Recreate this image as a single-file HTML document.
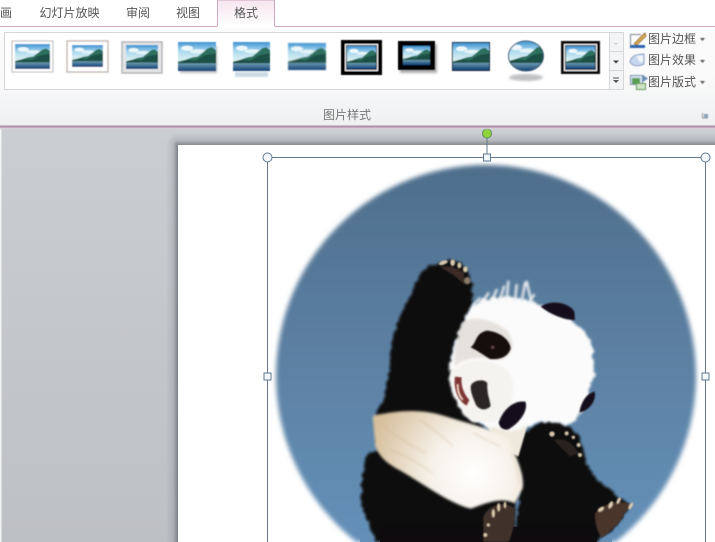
<!DOCTYPE html>
<html lang="zh"><head><meta charset="utf-8"><style>
html,body{margin:0;padding:0;width:715px;height:542px;overflow:hidden}
#w{position:relative;width:715px;height:542px;overflow:hidden;background:#c6c9cd;font-family:"Liberation Sans","Noto Sans CJK SC",sans-serif;color:#555;font-size:12px}
.t{position:absolute;white-space:nowrap;line-height:16px;filter:blur(.3px)}
svg{position:absolute;left:0;top:0}
</style></head><body><div id="w">
<svg width="715" height="542" viewBox="0 0 715 542" xmlns="http://www.w3.org/2000/svg">
<defs>
<linearGradient id="rb" x1="0" y1="0" x2="0" y2="1"><stop offset="0" stop-color="#fdfdfd"/><stop offset=".65" stop-color="#f9f9fa"/><stop offset="1" stop-color="#eef0f1"/></linearGradient>
<linearGradient id="bg" x1="0" y1="0" x2="0" y2="1"><stop offset="0" stop-color="#ced1d5"/><stop offset="1" stop-color="#bdc0c5"/></linearGradient>
<linearGradient id="shl" x1="0" y1="0" x2="1" y2="0"><stop offset="0" stop-color="#70747a" stop-opacity="0"/><stop offset=".6" stop-color="#70747a" stop-opacity=".22"/><stop offset="1" stop-color="#70747a" stop-opacity=".85"/></linearGradient>
<linearGradient id="sht" x1="0" y1="0" x2="0" y2="1"><stop offset="0" stop-color="#70747a" stop-opacity="0"/><stop offset=".6" stop-color="#70747a" stop-opacity=".22"/><stop offset="1" stop-color="#70747a" stop-opacity=".75"/></linearGradient>
<radialGradient id="shc" gradientUnits="userSpaceOnUse" cx="178" cy="145" r="12"><stop offset="0" stop-color="#70747a" stop-opacity=".8"/><stop offset=".4" stop-color="#70747a" stop-opacity=".22"/><stop offset="1" stop-color="#70747a" stop-opacity="0"/></radialGradient>
<linearGradient id="tab" x1="0" y1="0" x2="0" y2="1"><stop offset="0" stop-color="#f5e4ee"/><stop offset="1" stop-color="#fff"/></linearGradient>
<linearGradient id="sky" x1="0" y1="0" x2="0" y2="1"><stop offset="0" stop-color="#3f93d2"/><stop offset=".3" stop-color="#a9d8ee"/><stop offset=".6" stop-color="#d8eef2"/></linearGradient>
<linearGradient id="sea" x1="0" y1="0" x2="0" y2="1"><stop offset="0" stop-color="#6d9cae"/><stop offset="1" stop-color="#123f78"/></linearGradient>
<linearGradient id="circ" gradientUnits="userSpaceOnUse" x1="0" y1="165" x2="0" y2="542"><stop offset="0" stop-color="#4e6e8c"/><stop offset=".5" stop-color="#5c80a2"/><stop offset="1" stop-color="#6490b8"/></linearGradient>
<radialGradient id="belly" gradientUnits="userSpaceOnUse" cx="400" cy="700" r="320"><stop offset="0" stop-color="#ffffff"/><stop offset=".4" stop-color="#f6f1e9"/><stop offset="1" stop-color="#d6bf9c"/></radialGradient>
<filter id="b1"><feGaussianBlur stdDeviation="1"/></filter>
<filter id="b3" x="-5%" y="-5%" width="110%" height="110%"><feGaussianBlur stdDeviation="2.4"/></filter>
<filter id="s1"><feGaussianBlur stdDeviation=".5"/></filter>
<filter id="fur" filterUnits="userSpaceOnUse" x="-50" y="-50" width="1100" height="1100"><feTurbulence type="fractalNoise" baseFrequency=".05" numOctaves="2" seed="4" result="n"/><feDisplacementMap in="SourceGraphic" in2="n" scale="20" xChannelSelector="R" yChannelSelector="G"/><feGaussianBlur stdDeviation="3.6"/></filter>
<filter id="sf" filterUnits="userSpaceOnUse" x="-50" y="-50" width="1100" height="1100"><feGaussianBlur stdDeviation="4"/></filter>
<filter id="sm" filterUnits="userSpaceOnUse" x="-50" y="-50" width="1100" height="1100"><feGaussianBlur stdDeviation="2.6"/></filter>
<symbol id="pic" viewBox="0 0 38 28" preserveAspectRatio="none">
<rect width="38" height="28" fill="url(#sky)"/>
<ellipse cx="9" cy="6" rx="6" ry="2.5" fill="#eef8fb"/><ellipse cx="20" cy="9" rx="8" ry="2" fill="#e4f3f6"/>
<path d="M0 19 L8 17 L14 15 L20 14 L25 10 L30 6 L34 5 L38 8 V21 H0Z" fill="#2f6f5f"/>
<path d="M0 20 L10 17 L18 18 L26 13 L38 11 V21 H0Z" fill="#1f5044"/>
<rect y="20.5" width="38" height="7.5" fill="url(#sea)"/>
</symbol>
</defs>

<!-- workspace -->
<rect width="715" height="542" fill="url(#bg)"/>
<rect x="0" y="127" width="1.5" height="415" fill="#f2f3f4"/>
<rect x="166" y="145" width="12" height="397" fill="url(#shl)"/>
<rect x="178" y="133" width="537" height="12" fill="url(#sht)"/>
<rect x="166" y="133" width="12" height="12" fill="url(#shc)"/>
<rect x="178" y="145" width="537" height="397" fill="#fff"/>

<!-- picture -->
<path d="M356.400 542 A210 211 0 1 1 615.600 542 Z" fill="url(#circ)" filter="url(#b3)"/>
<rect x="360" y="532" width="252" height="10" fill="#6490b8"/>

<g transform="translate(340 240) scale(.33333)">
 <!-- black body -->
 <g filter="url(#fur)">
 <path d="M232 125 C240 85 280 62 330 62 C370 66 395 95 398 150 C400 195 370 250 345 310 C330 370 330 430 350 480 L400 540 L540 640 L520 906 L110 906 C80 850 50 780 70 700 L78 645 L115 630 L110 520 C130 470 150 420 150 370 C150 300 170 240 205 180Z" fill="#0e0b0e"/>
 <path d="M525 620 C545 570 590 545 640 545 C690 550 730 590 735 650 C745 700 790 745 870 790 L830 860 L770 906 L515 906 C540 830 545 760 520 680Z" fill="#100c10"/>
 </g>
 <rect x="120" y="860" width="650" height="46" fill="#0e0b0e"/>
 <!-- filler under chin -->
 <path d="M420 530 L570 530 L535 650 L480 620Z" fill="#efe8dc" filter="url(#sm)"/>
 <!-- belly -->
 <path d="M98 528 C170 510 250 505 320 530 C400 555 470 570 510 600 C525 650 555 700 548 745 L525 790 C480 770 440 790 392 806 C330 790 270 745 195 700 C160 680 125 665 106 620Z" fill="url(#belly)" filter="url(#sf)"/>
 <g fill="none" stroke="#c9ad88" stroke-width="5" opacity=".3" filter="url(#sf)">
  <path d="M130 560 Q200 610 260 640"/><path d="M150 630 Q210 650 280 700"/><path d="M240 540 Q300 580 340 620"/><path d="M515 640 Q535 690 538 735"/><path d="M400 580 Q440 600 480 620"/>
 </g>
 <!-- head -->
 <g filter="url(#fur)">
 <path d="M395 195 C440 170 520 160 590 190 C650 210 720 250 750 300 C768 350 765 420 745 470 C730 510 710 540 690 555 L600 545 L520 575 C470 565 420 560 385 535 C340 490 322 440 330 385 C335 320 365 250 395 195Z" fill="#fbfbfb"/>
 </g>
 <path d="M365 250 C395 225 450 235 500 270 C530 310 520 350 480 360 C420 350 370 350 345 380 C340 330 350 290 365 250Z" fill="#d8d0c8" opacity=".6" filter="url(#sf)"/>
 <path d="M335 395 C390 345 470 355 510 400 C535 450 510 510 480 545 L400 545 C355 500 335 450 335 395Z" fill="#f5f3f0" filter="url(#sf)"/>
 <!-- ears -->
 <path d="M602 200 C630 180 685 185 703 215 L705 240 C670 240 635 225 602 200Z" fill="#15111a" filter="url(#sm)"/>
 <path d="M718 518 C722 490 738 460 764 455 C770 482 748 512 718 518Z" fill="#15111a" filter="url(#sm)"/>
 <!-- eye patches -->
 <path d="M392 322 C410 310 405 280 440 272 C480 275 510 300 512 325 C505 350 480 360 450 357 C430 345 410 330 392 322Z" fill="#120d10" filter="url(#sm)"/>
 <path d="M476 548 C488 510 520 480 556 485 C566 510 540 548 505 568 C490 572 478 562 476 548Z" fill="#15111a" filter="url(#sm)"/>
 <circle cx="458" cy="322" r="5" fill="#6a4a44" filter="url(#sm)"/>
 <!-- nose & mouth -->
 <path d="M392 440 C395 420 435 415 442 430 C440 460 450 480 452 498 C440 512 420 512 408 495 C400 475 392 460 392 440Z" fill="#2a2628" filter="url(#sm)"/>
 <path d="M345 410 C340 445 352 480 380 497 L388 480 C370 460 362 435 365 412Z" fill="#7d3530" filter="url(#sm)"/>
 <path d="M353 432 C352 452 358 468 368 480" fill="none" stroke="#f2dccb" stroke-width="6" filter="url(#sm)"/>
 <!-- crest hairs -->
 <g stroke="#f2f4f7" stroke-width="7" fill="none" filter="url(#sf)" stroke-linecap="round">
  <path d="M400 195 L420 175"/><path d="M425 190 L445 160"/><path d="M455 185 L470 150"/><path d="M480 180 L492 140"/><path d="M500 180 L505 125"/><path d="M525 185 L530 135"/><path d="M545 185 L555 130"/><path d="M565 190 L582 165"/><path d="M575 190 L560 125"/>
 </g>
 <!-- paws -->
 <g filter="url(#sm)" fill="#d8c8ad">
  <path d="M300 82 Q340 72 372 100 L375 135 Q340 100 300 82Z" fill="#3a2c28"/>
  <ellipse cx="310" cy="68" rx="14" ry="6" transform="rotate(-20 310 68)"/><ellipse cx="338" cy="68" rx="7" ry="10"/><ellipse cx="358" cy="76" rx="6" ry="9"/><ellipse cx="376" cy="88" rx="7" ry="9"/><ellipse cx="382" cy="122" rx="9" ry="11" fill="#8a7a68"/>
  <path d="M640 600 Q690 590 715 640 L690 650 Q660 620 640 600Z" fill="#2c201e"/>
  <circle cx="636" cy="582" r="8"/><circle cx="680" cy="580" r="6"/><circle cx="700" cy="592" r="5"/><circle cx="716" cy="615" r="6"/><circle cx="720" cy="645" r="6"/>
 </g>
 <path d="M430 830 C445 795 490 780 525 805 C525 850 515 890 505 906 L430 906Z" fill="#3f302c" filter="url(#sm)"/>
 <path d="M765 820 C790 790 840 775 870 795 L835 850 L785 895 C770 870 765 850 765 820Z" fill="#4a352c" filter="url(#sm)"/>
 <g filter="url(#sm)" fill="#dccbb0">
  <ellipse cx="460" cy="820" rx="5" ry="13"/><ellipse cx="476" cy="802" rx="5" ry="13"/><ellipse cx="495" cy="795" rx="4" ry="10"/><circle cx="445" cy="855" r="5"/><circle cx="436" cy="885" r="6"/>
  <ellipse cx="783" cy="808" rx="11" ry="6" transform="rotate(-35 783 808)"/><ellipse cx="812" cy="795" rx="6" ry="12" transform="rotate(25 812 795)"/><ellipse cx="836" cy="782" rx="5" ry="11" transform="rotate(25 836 782)"/><ellipse cx="872" cy="798" rx="5" ry="12" transform="rotate(30 872 798)"/>
 </g>
</g>

<!-- selection -->
<path d="M267.500 542 V157.500 H705.500 V542 M487 137 V154" fill="none" stroke="#64798f"/>
<circle cx="487" cy="133.500" r="4.500" fill="#8fd43a" stroke="#5f8f55"/>
<g fill="#f4f8fc" stroke="#5f7890">
<circle cx="267.500" cy="157.500" r="4.500"/><circle cx="705.500" cy="157.500" r="4.500"/>
<rect x="483.500" y="154" width="7" height="7"/>
<rect x="264" y="373" width="7" height="7"/><rect x="702" y="373" width="7" height="7"/>
</g>

<!-- ribbon -->
<rect width="715" height="127" fill="url(#rb)"/>
<rect width="715" height="26" fill="#fff"/>
<line x1="0" y1="26.500" x2="217" y2="26.500" stroke="#cfa9c0"/>
<line x1="275" y1="26.500" x2="715" y2="26.500" stroke="#cfa9c0"/>
<path d="M217.500 26.500 V0 H274.500 V26.500" fill="url(#tab)" stroke="#cfa9c0"/>
<rect x="218" y="24" width="56" height="4" fill="#fff"/>
<rect x="0" y="125.500" width="715" height="2.200" fill="#b58ea9"/>
<rect x="0" y="127.500" width="715" height="2" fill="#d6d2d8" opacity=".7"/>

<!-- gallery -->
<rect x="4.500" y="32.500" width="605" height="57" fill="#fff" stroke="#d6d6d9"/>
<g fill="#f3f4f6" stroke="#d6d7da">
<rect x="609.500" y="32.500" width="14" height="19"/><rect x="609.500" y="51.500" width="14" height="19"/><rect x="609.500" y="70.500" width="14" height="19"/>
</g>
<path d="M614 43h4l-2 2z" fill="#c7c9cc"/>
<path d="M613 60.500h6l-3 3z" fill="#444"/>
<path d="M613 77.500h6v1h-6z M613 80h6l-3 3z" fill="#555"/>

<!-- thumbs -->
<g filter="url(#s1)">
<rect x="12" y="41" width="41" height="31" fill="#fff" stroke="#bbb"/><use href="#pic" x="15" y="44" width="35" height="25"/>
<rect x="67" y="41" width="41" height="31" fill="#fff" stroke="#c4b8b4" stroke-width="1.400"/><use href="#pic" x="72" y="45" width="31" height="22"/>
<rect x="122" y="42" width="40" height="31" fill="#e3e5e9" stroke="#b5b5b5" stroke-width="1.500"/><use href="#pic" x="126" y="45" width="32" height="24"/>
<rect x="180" y="46" width="37" height="27" fill="#8b8f92" opacity=".6" filter="url(#b1)"/><use href="#pic" x="178" y="42" width="38" height="29"/>
<use href="#pic" x="233" y="42" width="37" height="29"/><rect x="235" y="72" width="33" height="5" fill="#a8c2d4" opacity=".6" filter="url(#s1)"/>
<g filter="url(#s1)"><use href="#pic" x="288" y="43" width="38" height="27"/></g>
<rect x="341" y="40" width="41" height="35" fill="#000"/><rect x="345.500" y="44.500" width="32" height="26" fill="none" stroke="#fff"/><use href="#pic" x="347" y="46" width="29" height="23"/>
<rect x="400" y="44" width="37" height="29" fill="#777" opacity=".6" filter="url(#b1)"/><rect x="398" y="41" width="37" height="29" fill="#000"/><use href="#pic" x="403" y="46" width="27" height="19"/>
<rect x="452" y="42" width="38" height="29" fill="#1c2a40"/><use href="#pic" x="453" y="43" width="36" height="27"/>
<ellipse cx="526" cy="77.500" rx="17" ry="3.500" fill="#bfc1c3" filter="url(#b1)"/>
<clipPath id="ov"><ellipse cx="526" cy="56" rx="17.500" ry="15"/></clipPath>
<g clip-path="url(#ov)"><use href="#pic" x="507" y="41" width="38" height="30"/></g>
<ellipse cx="526" cy="56" rx="17.500" ry="15" fill="none" stroke="#3e5c76"/>
<rect x="561" y="41" width="39" height="33" fill="#111"/><rect x="564.500" y="44.500" width="32" height="26" fill="none" stroke="#fff"/><use href="#pic" x="566" y="46" width="29" height="23"/>
</g>

<!-- right icons -->
<g filter="url(#s1)">
<path d="M630.500 45 V34.500 H641" fill="none" stroke="#7f8a96"/>
<rect x="630" y="45" width="15" height="3" fill="#2f67ac"/>
<path d="M634 44 L642 35.500 L645 33 L646 36 L637 45Z" fill="#d9a84e" stroke="#7a5c34" stroke-width=".7"/>
<path d="M630 62 C631 56 636 54 644 54 L644 64 C638 67 632 66 630 62Z" fill="#c6d6ee" stroke="#8ea3bf"/><path d="M637 55.500 H643 V62 C640 63 638 61 637 55.500Z" fill="#f0f3f8"/>
<rect x="630.500" y="75.500" width="12" height="9" fill="#d4e2ef" stroke="#7a94ad"/>
<path d="M643 75 L648 78.500 L643 82Z" fill="#6b8fb5"/>
<rect x="632" y="78" width="8" height="6" fill="#5a9e52"/>
<rect x="636.500" y="83.500" width="9" height="6" fill="#cfe3c7" stroke="#5c9a52"/>
<path d="M700 38h5l-2.500 3z M700 60h5l-2.500 3z M700 81h5l-2.500 3z" fill="#555"/>
<path d="M702.500 113 V118 H708" fill="none" stroke="#999"/><rect x="704" y="114" width="4" height="4" fill="#8aa0b8"/>
</g>
</svg>

<div class="t" style="left:0;top:5px">画</div>
<div class="t" style="left:39.500px;top:5px">幻灯片放映</div>
<div class="t" style="left:126px;top:5px">审阅</div>
<div class="t" style="left:176px;top:5px">视图</div>
<div class="t" style="left:234px;top:5px">格式</div>
<div class="t" style="left:648px;top:31px">图片边框</div>
<div class="t" style="left:648px;top:52px">图片效果</div>
<div class="t" style="left:648px;top:74px">图片版式</div>
<div class="t" style="left:323px;top:107px;color:#777">图片样式</div>
</div></body></html>
